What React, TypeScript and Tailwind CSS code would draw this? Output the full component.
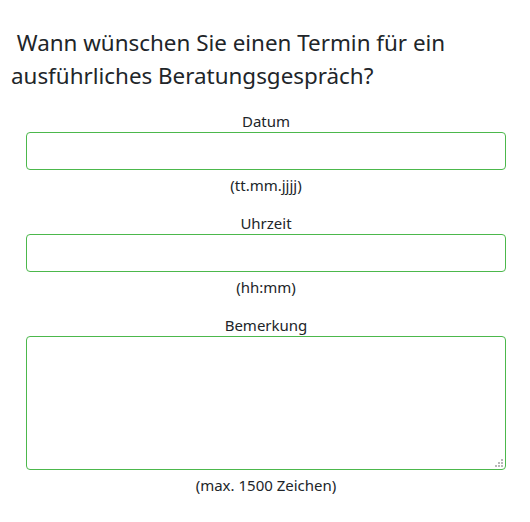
import React from "react";

const font = { fontFamily: '"Segoe UI", "Noto Sans", "Open Sans", sans-serif' };

function Grip() {
  const dots: [number, number][] = [
    [6, 0],
    [3, 3],
    [6, 3],
    [0, 6],
    [3, 6],
    [6, 6],
  ];
  return (
    <svg
      className="absolute right-[3px] bottom-[3px] pointer-events-none"
      width="8"
      height="8"
      viewBox="0 0 8 8"
    >
      {dots.map(([x, y], i) => (
        <rect key={i} x={x} y={y} width="2" height="2" fill="#b8b8b8" />
      ))}
    </svg>
  );
}

function Field({
  label,
  hint,
  tall,
}: {
  label: string;
  hint: string;
  tall?: boolean;
}) {
  return (
    <div className="flex flex-col items-center">
      <label className="text-[15px] leading-[22px] text-[#212529]">{label}</label>
      {tall ? (
        <div className="relative w-[480px] h-[134px]">
          <textarea className="w-full h-full border border-[#4cb84c] rounded-[4px] outline-none resize-none block" />
          <Grip />
        </div>
      ) : (
        <input className="w-[480px] h-[38px] border border-[#4cb84c] rounded-[4px] outline-none block" />
      )}
      <div className="text-[15px] leading-[30px] text-[#212529]">{hint}</div>
    </div>
  );
}

export default function App() {
  return (
    <div className="w-[530px] h-[522px] bg-white" style={font}>
      <h2 className="pl-[11px] pt-[26px] text-[22.4px] leading-[33px] text-[#212529] font-normal">
        &nbsp;Wann wünschen Sie einen Termin für ein
        <br />
        ausführliches Beratungsgespräch?
      </h2>
      <div className="mt-[18px] pl-[26px] w-[506px] flex flex-col gap-[12px]">
        <Field label="Datum" hint="(tt.mm.jjjj)" />
        <Field label="Uhrzeit" hint="(hh:mm)" />
        <Field label="Bemerkung" hint="(max. 1500 Zeichen)" tall />
      </div>
    </div>
  );
}
